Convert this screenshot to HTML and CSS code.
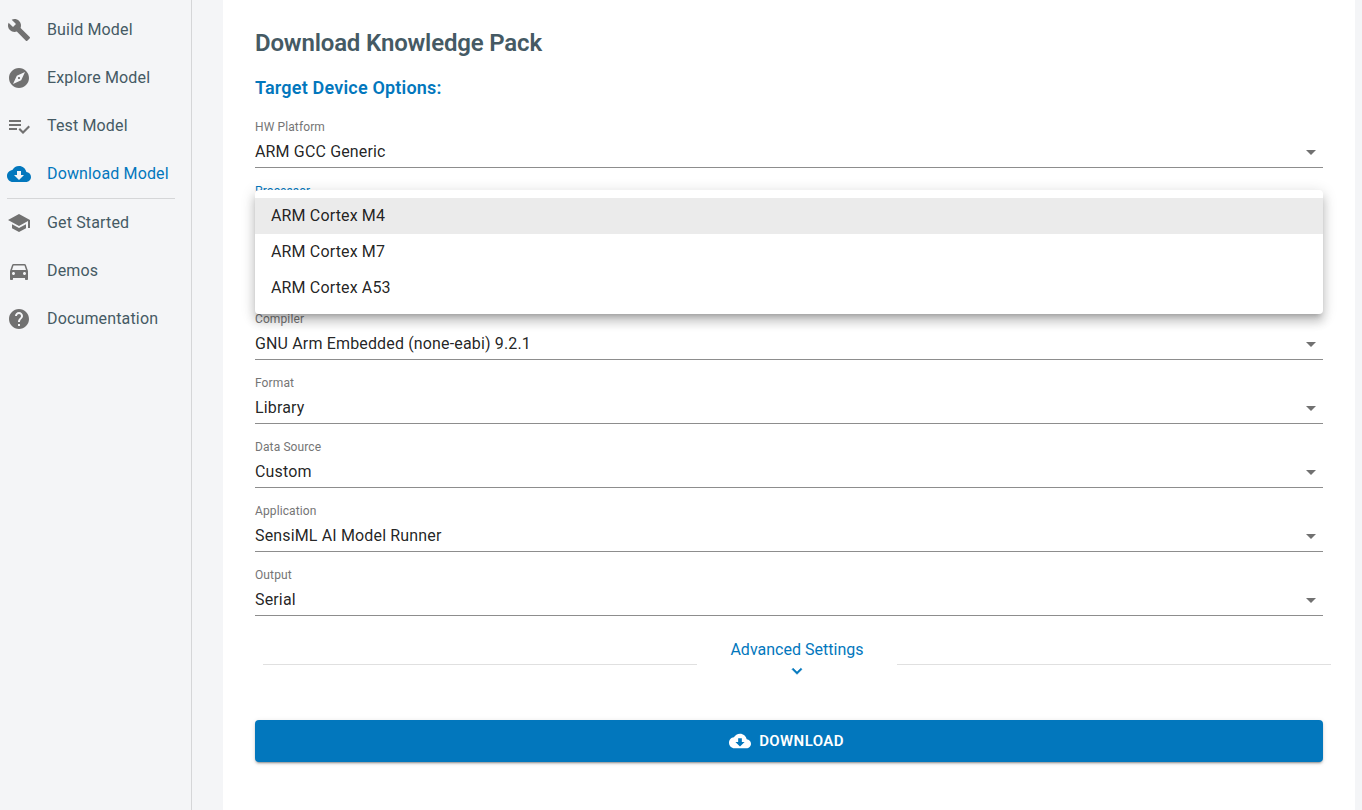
FILE: index.html
```html
<!DOCTYPE html>
<html lang="en">
<head>
<meta charset="utf-8">
<title>Download Model</title>
<link rel="stylesheet" href="styles.css">
</head>
<body>
<div class="app">
  <nav class="sidebar">
    <a class="nav-item"><svg class="icon" viewBox="0 0 24 24"><path d="M22.7 19l-9.1-9.1c.9-2.3.4-5-1.500-6.900-2-2-5-2.400-7.400-1.300L9 6 6 9 1.600 4.700C.4 7.100.9 10.100 2.900 12.100c1.900 1.900 4.600 2.400 6.900 1.500l9.100 9.100c.4.4 1 .4 1.400 0l2.300-2.300c.5-.4.5-1.100.1-1.400z"/></svg><span>Build Model</span></a>
    <a class="nav-item"><svg class="icon" viewBox="0 0 24 24"><path d="M12 10.900c-.61 0-1.100.49-1.100 1.100s.49 1.100 1.100 1.100c.61 0 1.100-.49 1.100-1.100s-.49-1.100-1.100-1.100zM12 2C6.480 2 2 6.480 2 12s4.480 10 10 10 10-4.480 10-10S17.520 2 12 2zm2.190 12.190L6 18l3.810-8.190L18 6l-3.810 8.190z"/></svg><span>Explore Model</span></a>
    <a class="nav-item"><svg class="icon" viewBox="0 0 24 24"><path d="M14 10H2v2h12v-2zm0-4H2v2h12V6zM2 16h8v-2H2v2zm19.500-4.500L23 13l-6.990 7-4.510-4.500L13 14l3.010 3 5.490-5.500z"/></svg><span>Test Model</span></a>
    <a class="nav-item active"><svg class="icon" viewBox="0 0 24 24"><path d="M19.350 10.040C18.670 6.590 15.640 4 12 4 9.110 4 6.600 5.640 5.350 8.040 2.340 8.360 0 10.910 0 14c0 3.310 2.690 6 6 6h13c2.760 0 5-2.240 5-5 0-2.640-2.050-4.780-4.650-4.960zM17 13l-5 5-5-5h3V9h4v4h3z"/></svg><span>Download Model</span></a>
    <hr class="nav-divider">
    <a class="nav-item"><svg class="icon" viewBox="0 0 24 24"><path d="M5 13.180v4L12 21l7-3.820v-4L12 17l-7-3.820zM12 3L1 9l11 6 9-4.910V17h2V9L12 3z"/></svg><span>Get Started</span></a>
    <a class="nav-item"><svg class="icon car" viewBox="0 0 24 24"><path d="M18.920 6.010C18.720 5.420 18.160 5 17.500 5h-11c-.66 0-1.210.42-1.420 1.010L3 12v8c0 .55.45 1 1 1h1c.55 0 1-.45 1-1v-1h12v1c0 .55.45 1 1 1h1c.55 0 1-.45 1-1v-8l-2.080-5.990zM6.500 16c-.83 0-1.500-.67-1.500-1.500S5.670 13 6.500 13s1.500.67 1.500 1.500S7.330 16 6.500 16zm11 0c-.83 0-1.500-.67-1.500-1.500s.67-1.500 1.500-1.500 1.500.67 1.500 1.500-.67 1.500-1.500 1.500zM5 11l1.500-4.500h11L19 11H5z"/></svg><span>Demos</span></a>
    <a class="nav-item"><svg class="icon" viewBox="0 0 24 24"><path d="M12 2C6.480 2 2 6.480 2 12s4.480 10 10 10 10-4.480 10-10S17.520 2 12 2zm1 17h-2v-2h2v2zm2.070-7.750l-.9.920C13.450 12.900 13 13.500 13 15h-2v-.5c0-1.100.45-2.100 1.170-2.830l1.240-1.260c.37-.36.59-.86.59-1.410 0-1.100-.9-2-2-2s-2 .9-2 2H8c0-2.210 1.790-4 4-4s4 1.790 4 4c0 .88-.36 1.680-.93 2.250z"/></svg><span>Documentation</span></a>
  </nav>
  <main class="panel">
    <h1 class="title">Download Knowledge Pack</h1>
    <h2 class="section-title">Target Device Options:</h2>
    <form class="fields">
      <div class="field"><label class="label">HW Platform</label><div class="select"><span>ARM GCC Generic</span><svg class="icon caret" viewBox="0 0 24 24"><path d="M7 10l5 5 5-5z"/></svg></div></div>
      <div class="field"><label class="label focused">Processor</label><div class="select"></div>
        <ul class="menu">
          <li class="option selected">ARM Cortex M4</li>
          <li class="option">ARM Cortex M7</li>
          <li class="option">ARM Cortex A53</li>
        </ul>
      </div>
      <div class="field"><div class="select"></div></div>
      <div class="field"><label class="label">Compiler</label><div class="select"><span>GNU Arm Embedded (none-eabi) 9.2.1</span><svg class="icon caret" viewBox="0 0 24 24"><path d="M7 10l5 5 5-5z"/></svg></div></div>
      <div class="field"><label class="label">Format</label><div class="select"><span>Library</span><svg class="icon caret" viewBox="0 0 24 24"><path d="M7 10l5 5 5-5z"/></svg></div></div>
      <div class="field"><label class="label">Data Source</label><div class="select"><span>Custom</span><svg class="icon caret" viewBox="0 0 24 24"><path d="M7 10l5 5 5-5z"/></svg></div></div>
      <div class="field"><label class="label">Application</label><div class="select"><span>SensiML AI Model Runner</span><svg class="icon caret" viewBox="0 0 24 24"><path d="M7 10l5 5 5-5z"/></svg></div></div>
      <div class="field"><label class="label">Output</label><div class="select"><span>Serial</span><svg class="icon caret" viewBox="0 0 24 24"><path d="M7 10l5 5 5-5z"/></svg></div></div>
    </form>
    <div class="advanced">
      <span class="rule"></span>
      <div class="advanced-toggle">
        <span>Advanced Settings</span>
        <svg class="chevron" viewBox="0 0 24 24"><path d="M7.410 8.590L12 13.170l4.590-4.580L18 10l-6 6-6-6 1.410-1.410z"/></svg>
      </div>
      <span class="rule"></span>
    </div>
    <button class="download" type="button"><svg class="download-icon" viewBox="0 0 24 24"><path d="M19.350 10.040C18.670 6.590 15.640 4 12 4 9.110 4 6.600 5.640 5.350 8.040 2.340 8.360 0 10.910 0 14c0 3.310 2.690 6 6 6h13c2.760 0 5-2.240 5-5 0-2.640-2.050-4.780-4.650-4.960zM17 13l-5 5-5-5h3V9h4v4h3z"/></svg><span>Download</span></button>
  </main>
</div>
</body>
</html>
```
FILE: styles.css
```css
* { box-sizing: border-box; }
body {
  margin: 0;
  background: #f4f5f7;
  font-family: Roboto, "Liberation Sans", sans-serif;
  font-size: 16px;
  line-height: 24px;
  letter-spacing: 0.15px;
  color: rgba(0, 0, 0, 0.87);
}
.app { display: flex; height: 810px; overflow: hidden; }
.sidebar {
  width: 192px;
  flex: none;
  padding: 6px 16px 0 7px;
  border-right: 1px solid #d5d6d8;
}
.nav-item {
  display: flex;
  align-items: center;
  gap: 16px;
  height: 48px;
  color: #455a64;
  white-space: nowrap;
}
.nav-item span { margin-top: -1px; }
.icon { width: 24px; height: 24px; flex: none; fill: #717171; }
.car { margin-top: -1px; }
.active { color: #0277bd; }
.active .icon { fill: #0277bd; }
.nav-divider { margin: 0; border: 0; height: 1px; background: #d5d6d8; }
.panel {
  width: 1132px;
  margin-left: 31px;
  padding: 27px 32px 0;
  background: #fff;
}
.title {
  margin: 0;
  font-size: 24px;
  line-height: 32px;
  font-weight: 600;
  letter-spacing: -0.17px;
  color: #455a64;
}
.section-title {
  margin: 17px 0 20px;
  font-size: 18px;
  line-height: 24px;
  font-weight: 600;
  letter-spacing: 0.19px;
  color: #0277bd;
}
.fields { display: flex; flex-direction: column; gap: 16px; }
.field {
  position: relative;
  display: flex;
  flex-direction: column;
  justify-content: flex-end;
  height: 48px;
}
.label {
  height: 16px;
  font-size: 12px;
  line-height: 14px;
  letter-spacing: 0.11px;
  color: #757575;
}
.focused { color: #0277bd; }
.select {
  display: flex;
  align-items: center;
  justify-content: space-between;
  height: 32px;
  padding-bottom: 1px;
  border-bottom: 1px solid #8d8d8d;
}
.select span { padding-top: 2px; }
.caret { margin-top: 2px; }
.menu {
  position: absolute;
  z-index: 1;
  top: 6px;
  left: 0;
  right: 0;
  margin: 0;
  padding: 8px 0;
  list-style: none;
  background: #fff;
  border-radius: 4px;
  box-shadow: 0 5px 5px -3px rgba(0,0,0,.2), 0 8px 10px 1px rgba(0,0,0,.14), 0 3px 14px 2px rgba(0,0,0,.12);
}
.option { height: 36px; padding: 6px 16px; }
.selected { background: #ebebeb; }
.advanced {
  display: flex;
  align-items: center;
  height: 48px;
  margin: 24px -8px 0 8px;
}
.rule { flex: 1; height: 1px; background: #e0e0e0; }
.advanced-toggle {
  display: flex;
  flex-direction: column;
  align-items: center;
  width: 200px;
  height: 52px;
  letter-spacing: 0.02px;
  color: #0277bd;
}
.chevron {
  width: 20px;
  height: 20px;
  margin-top: -1px;
  fill: #0277bd;
  stroke: #0277bd;
  stroke-width: 0.7;
}
.download {
  display: flex;
  align-items: center;
  justify-content: center;
  gap: 8px;
  width: 100%;
  height: 42px;
  margin-top: 32px;
  padding: 0 5px 0 0;
  border: 0;
  border-radius: 4px;
  background: #0277bd;
  color: #fff;
  font: 600 15px/26px Roboto, "Liberation Sans", sans-serif;
  letter-spacing: 0.4px;
  text-transform: uppercase;
  box-shadow: 0 3px 1px -2px rgba(0,0,0,.2), 0 2px 2px rgba(0,0,0,.14), 0 1px 5px rgba(0,0,0,.12);
}
.download-icon { width: 22px; height: 22px; fill: #fff; }
```
